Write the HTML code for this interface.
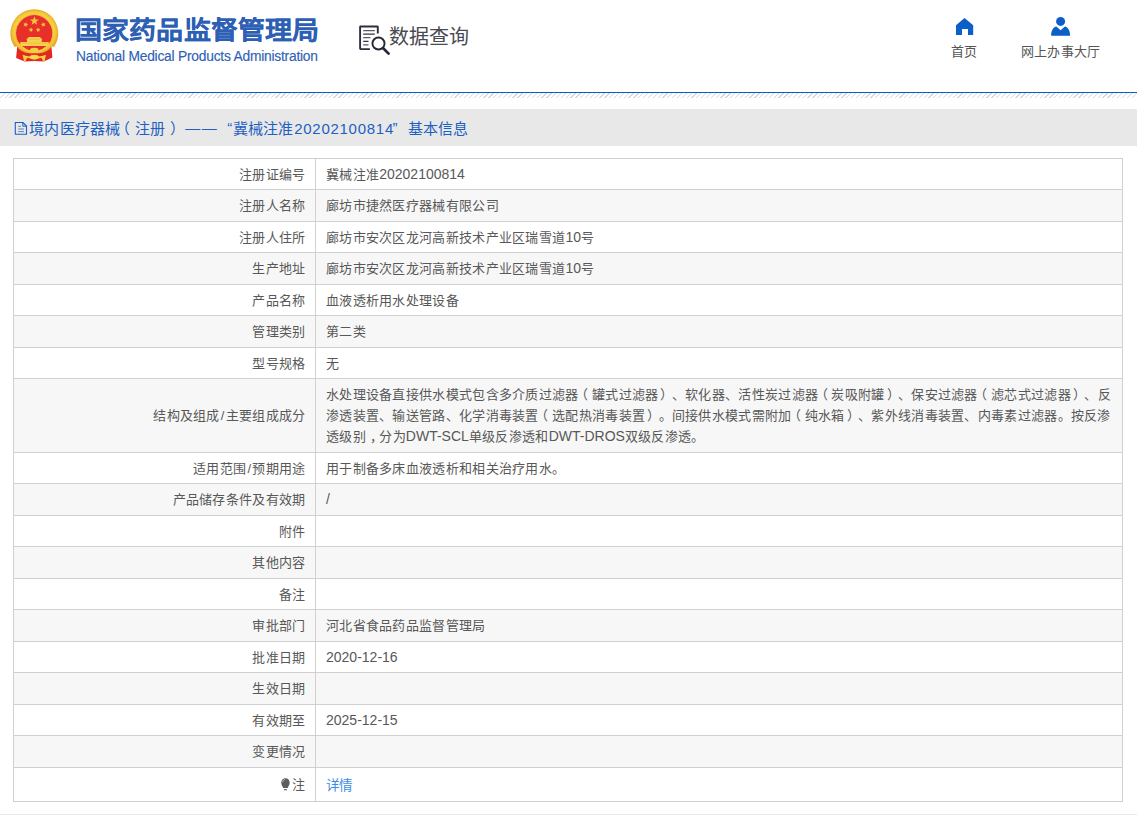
<!DOCTYPE html>
<html lang="zh-CN">
<head>
<meta charset="utf-8">
<style>
html,body{margin:0;padding:0;background:#fff;}
body{width:1137px;height:815px;overflow:hidden;position:relative;font-family:"Liberation Sans",sans-serif;color:#585858;text-spacing-trim:space-all;}
.abs{position:absolute;}
#t1{left:75px;top:13.5px;font-size:27px;font-weight:bold;color:#2d5fb4;white-space:nowrap;line-height:36px;letter-spacing:0.15px;-webkit-text-stroke:0.1px #2d5fb4;transform:scaleY(0.93);transform-origin:0 3.5px;}
#t2{left:76px;top:47.6px;font-size:13.8px;color:#3062b6;white-space:nowrap;line-height:18px;letter-spacing:-0.225px;-webkit-text-stroke:0.15px #3062b6;}
#qtext{left:388.5px;top:21px;font-size:20px;color:#4a4a52;white-space:nowrap;line-height:32px;letter-spacing:0.3px;}
.nav{font-size:13px;color:#555;white-space:nowrap;line-height:18px;letter-spacing:0.1px;}
#blueline{left:0;top:92px;width:1137px;height:1px;background:#0b5bc4;}
#stripes{left:0;top:93px;width:1137px;height:5px;
 background:repeating-linear-gradient(135deg, #fff 0, #fff 1.7px, #d6d6d6 1.7px, #d6d6d6 2.6px, #fff 2.6px, #fff 3.42px);background-position:-2.9px 0;}
#bar{left:0;top:109px;width:1137px;height:37px;background:#e8e8e8;}
#bartext{left:29px;top:118px;font-size:15px;color:#1d5fc2;white-space:nowrap;line-height:22px;letter-spacing:0.3px;}
#bartext .d{font-size:15px;letter-spacing:0.73px;}
#bartext span{position:absolute;top:0;}
.hl{position:absolute;left:13px;width:1110px;height:1px;background:#d0d0d0;}
.vl{position:absolute;width:1px;background:#d0d0d0;}
.lab{position:absolute;right:831.5px;font-size:13px;letter-spacing:0.3px;white-space:nowrap;}
.val{position:absolute;left:326px;font-size:13px;letter-spacing:0.3px;white-space:nowrap;}
.n{font-size:14px;letter-spacing:0;}
.po{position:relative;left:-3.5px;}
.pc{position:relative;left:1.9px;}
.cm{position:relative;left:4px;}
.lnk{color:#3a8ee6;position:relative;top:1.2px;font-size:13.5px;letter-spacing:0;}
.lamp{vertical-align:-2px;margin-right:1px;}
#bottomband{left:0;top:814px;width:1137px;height:1px;background:#e9e9e9;}
</style>
</head>
<body>
<svg id="emblem" class="abs" style="left:0;top:0" width="70" height="70" viewBox="0 0 70 70">
<defs><radialGradient id="gg" cx="0.5" cy="0.5" r="0.5"><stop offset="0.74" stop-color="#fbd848"/><stop offset="0.9" stop-color="#f4c438"/><stop offset="1" stop-color="#e6a828"/></radialGradient></defs>
<path d="M14.6 47 A24 24 0 1 1 54 47 L51.4 46.3 C50.1 49.6 47.6 51.6 44.6 52.6 C41.6 53.9 37.6 54.2 34.3 53.9 C31 54.2 27 53.9 24 52.6 C21 51.6 18.5 49.6 17.3 46.3 Z" fill="url(#gg)"/>
<circle cx="34.2" cy="33.3" r="18.2" fill="#e8302a"/>
<circle cx="34.2" cy="33.3" r="18.6" fill="none" stroke="#e9a428" stroke-width="0.8" opacity="0.7"/>
<path d="M34.40 16.30 L35.56 19.40 L38.87 19.55 L36.28 21.61 L37.16 24.80 L34.40 22.97 L31.64 24.80 L32.52 21.61 L29.93 19.55 L33.24 19.40 Z M26.34 22.21 L26.60 23.85 L28.10 24.56 L26.62 25.32 L26.41 26.97 L25.23 25.79 L23.60 26.10 L24.35 24.62 L23.56 23.16 L25.20 23.42 Z M42.66 22.21 L43.80 23.42 L45.44 23.16 L44.65 24.62 L45.40 26.10 L43.77 25.79 L42.59 26.97 L42.38 25.32 L40.90 24.56 L42.40 23.85 Z M31.36 27.43 L31.84 28.95 L33.37 29.41 L32.07 30.34 L32.10 31.93 L30.82 30.99 L29.32 31.51 L29.82 30.00 L28.85 28.73 L30.45 28.73 Z M37.74 27.43 L38.65 28.73 L40.25 28.73 L39.28 30.00 L39.78 31.51 L38.28 30.99 L37.00 31.93 L37.03 30.34 L35.73 29.41 L37.26 28.95 Z" fill="#f3c53c"/>
<path d="M28.6 37 H40.2 L40.8 38.6 H42.1 L41.6 41.9 H48.8 V45.9 H20.3 V41.9 H27.1 L26.6 38.6 H27.9 Z" fill="#f7d24c"/>
<path d="M28.8 39.2 H40 M21.5 43.2 H47.6" stroke="#eab838" stroke-width="0.7"/>
<path d="M17.8 43.5 Q34.3 60.8 50.8 43.5" fill="none" stroke="#f5ca3c" stroke-width="2.1"/>
<path d="M17.3 46.3 C18.5 49 21 51 24 52 C27 53.3 31 53.6 34.3 53.3 C37.6 53.6 41.6 53.3 44.6 52 C47.6 51 50.1 49 51.4 46.3 L52.4 57.6 L43.8 61.6 L34.3 61 L24.8 61.6 L16.1 58 Z" fill="#e2281f"/>
<path d="M22.6 54.8 C27 56.3 30 56.6 34.3 56.6 C38.6 56.6 41.6 56.3 46 54.8 L44.6 61 L43.2 61.2 L41.4 57.8 L34.3 59.4 L27.2 57.8 L25.4 61.2 L24 61 Z" fill="#f5cf42"/>
<ellipse cx="34.3" cy="57.1" rx="4.4" ry="2.4" fill="#f7d650"/>
<ellipse cx="34.3" cy="49.9" rx="4.3" ry="2.1" fill="#f5cf42"/>
</svg>
<div id="t1" class="abs">国家药品监督管理局</div>
<div id="t2" class="abs">National Medical Products Administration</div>
<svg id="qicon" class="abs" style="left:350px;top:20px" width="50" height="40" viewBox="350 20 50 40">
<path d="M377.8 33.5 V27 Q377.8 26.5 377.3 26.5 H360.6 Q360.1 26.5 360.1 27 V48.6 Q360.1 49.1 360.6 49.1 H369.9" fill="none" stroke="#2e2e3e" stroke-width="1.9"/>
<path d="M363.2 30.7 H374.8 M363.2 37.7 H370.4 M363.2 44.9 H368.5" stroke="#5a5a66" stroke-width="1.2"/>
<path d="M363.2 34.2 H374.8 M363.2 41.4 H368.5" stroke="#33333f" stroke-width="1.2"/>
<circle cx="378.5" cy="43.5" r="6.05" fill="none" stroke="#262636" stroke-width="1.9"/>
<path d="M383.2 48.2 L388.6 53.6" stroke="#262636" stroke-width="2.7" stroke-linecap="round"/>
</svg>
<div id="qtext" class="abs">数据查询</div>

<svg class="abs" style="left:955px;top:17px" width="20" height="19" viewBox="0 0 20 19"><path d="M9.5 1 L18.2 8.3 V18 H13 V12 H7 V18 H1 V8.3 Z" fill="#0b5fc6"/></svg>
<div class="abs nav" style="left:951px;top:43px">首页</div>
<svg class="abs" style="left:1050px;top:16px" width="22" height="21" viewBox="0 0 22 21"><circle cx="10.6" cy="5.4" r="4.5" fill="#0b5fc6"/><path d="M1.1 19.8 C1.1 14 4 11 6.3 10.6 L10.6 14.3 L14.9 10.6 C17.3 11 20.1 14 20.1 19.8 Z" fill="#0b5fc6"/></svg>
<div class="abs nav" style="left:1020.5px;top:43px;letter-spacing:0.35px">网上办事大厅</div>

<div id="blueline" class="abs"></div>
<div id="stripes" class="abs"></div>
<div id="bar" class="abs"></div>
<svg id="docicon" class="abs" style="left:10px;top:118px" width="22" height="22" viewBox="10 118 22 22">
<path d="M15.3 122.5 H23 L26.5 126 V134.3 H15.3 Z" fill="none" stroke="#1d5fc2" stroke-width="1.1"/>
<path d="M22.8 122.5 V126.2 H26.5" fill="none" stroke="#1d5fc2" stroke-width="1"/>
<path d="M18.2 126.3 H21 M18.2 129 H24 M18.2 131.6 H24" stroke="#4a78c8" stroke-width="0.9"/>
</svg>
<div id="bartext" class="abs">
<span style="left:0">境内医疗器械</span><span style="left:86.4px">（</span><span style="left:105.5px">注册</span><span style="left:140.8px">）</span><span style="left:156.3px;letter-spacing:1.4px;top:-1px">——</span><span style="left:198.3px;top:-1.5px">“</span><span style="left:203.5px">冀械注准</span><span class="d" style="left:265.2px">20202100814</span><span style="left:363.5px;top:-1.5px">”</span><span style="left:378.5px">基本信息</span>
</div>

<div class="abs" style="left:13px;top:158px;width:1110px;height:31px;background:#fff"></div>
<div class="abs" style="left:13px;top:189px;width:1110px;height:32px;background:#f7f7f7"></div>
<div class="abs" style="left:13px;top:221px;width:1110px;height:31px;background:#fff"></div>
<div class="abs" style="left:13px;top:252px;width:1110px;height:32px;background:#f7f7f7"></div>
<div class="abs" style="left:13px;top:284px;width:1110px;height:31px;background:#fff"></div>
<div class="abs" style="left:13px;top:315px;width:1110px;height:32px;background:#f7f7f7"></div>
<div class="abs" style="left:13px;top:347px;width:1110px;height:31px;background:#fff"></div>
<div class="abs" style="left:13px;top:378px;width:1110px;height:74px;background:#f7f7f7"></div>
<div class="abs" style="left:13px;top:452px;width:1110px;height:31px;background:#fff"></div>
<div class="abs" style="left:13px;top:483px;width:1110px;height:32px;background:#f7f7f7"></div>
<div class="abs" style="left:13px;top:515px;width:1110px;height:31px;background:#fff"></div>
<div class="abs" style="left:13px;top:546px;width:1110px;height:32px;background:#f7f7f7"></div>
<div class="abs" style="left:13px;top:578px;width:1110px;height:31px;background:#fff"></div>
<div class="abs" style="left:13px;top:609px;width:1110px;height:32px;background:#f7f7f7"></div>
<div class="abs" style="left:13px;top:641px;width:1110px;height:31px;background:#fff"></div>
<div class="abs" style="left:13px;top:672px;width:1110px;height:32px;background:#f7f7f7"></div>
<div class="abs" style="left:13px;top:704px;width:1110px;height:31px;background:#fff"></div>
<div class="abs" style="left:13px;top:735px;width:1110px;height:32px;background:#f7f7f7"></div>
<div class="abs" style="left:13px;top:767px;width:1110px;height:34px;background:#fff"></div>
<div class="hl" style="top:158px"></div>
<div class="hl" style="top:189px"></div>
<div class="hl" style="top:221px"></div>
<div class="hl" style="top:252px"></div>
<div class="hl" style="top:284px"></div>
<div class="hl" style="top:315px"></div>
<div class="hl" style="top:347px"></div>
<div class="hl" style="top:378px"></div>
<div class="hl" style="top:452px"></div>
<div class="hl" style="top:483px"></div>
<div class="hl" style="top:515px"></div>
<div class="hl" style="top:546px"></div>
<div class="hl" style="top:578px"></div>
<div class="hl" style="top:609px"></div>
<div class="hl" style="top:641px"></div>
<div class="hl" style="top:672px"></div>
<div class="hl" style="top:704px"></div>
<div class="hl" style="top:735px"></div>
<div class="hl" style="top:767px"></div>
<div class="hl" style="top:801px"></div>
<div class="vl" style="left:13px;top:158px;height:644px"></div>
<div class="vl" style="left:315px;top:158px;height:644px"></div>
<div class="vl" style="left:1122px;top:158px;height:644px"></div>
<div class="lab" style="top:163.5px;line-height:21px">注册证编号</div>
<div class="val" style="top:163.5px;line-height:21px">冀械注准<span class="n">20202100814</span></div>
<div class="lab" style="top:195.0px;line-height:21px">注册人名称</div>
<div class="val" style="top:195.0px;line-height:21px">廊坊市捷然医疗器械有限公司</div>
<div class="lab" style="top:226.5px;line-height:21px">注册人住所</div>
<div class="val" style="top:226.5px;line-height:21px">廊坊市安次区龙河高新技术产业区瑞雪道<span class="n">10</span>号</div>
<div class="lab" style="top:258.0px;line-height:21px">生产地址</div>
<div class="val" style="top:258.0px;line-height:21px">廊坊市安次区龙河高新技术产业区瑞雪道<span class="n">10</span>号</div>
<div class="lab" style="top:289.5px;line-height:21px">产品名称</div>
<div class="val" style="top:289.5px;line-height:21px">血液透析用水处理设备</div>
<div class="lab" style="top:321.0px;line-height:21px">管理类别</div>
<div class="val" style="top:321.0px;line-height:21px">第二类</div>
<div class="lab" style="top:352.5px;line-height:21px">型号规格</div>
<div class="val" style="top:352.5px;line-height:21px">无</div>
<div class="lab" style="top:405.0px;line-height:21px">结构及组成<span style="margin:0 1px">/</span>主要组成成分</div>
<div class="val" style="top:384.0px;line-height:21px">水处理设备直接供水模式包含多介质过滤器<span class="po">（</span>罐式过滤器<span class="pc">）</span>、软化器、活性炭过滤器<span class="po">（</span>炭吸附罐<span class="pc">）</span>、保安过滤器<span class="po">（</span>滤芯式过滤器<span class="pc">）</span>、反<br>渗透装置、输送管路、化学消毒装置<span class="po">（</span>选配热消毒装置<span class="pc">）</span>。间接供水模式需附加<span class="po">（</span>纯水箱<span class="pc">）</span>、紫外线消毒装置、内毒素过滤器。按反渗<br>透级别<span class="cm">，</span>分为<span class="n">DWT-SCL</span>单级反渗透和<span class="n">DWT-DROS</span>双级反渗透。</div>
<div class="lab" style="top:457.5px;line-height:21px">适用范围<span style="margin:0 1px">/</span>预期用途</div>
<div class="val" style="top:457.5px;line-height:21px">用于制备多床血液透析和相关治疗用水。</div>
<div class="lab" style="top:489.0px;line-height:21px">产品储存条件及有效期</div>
<div class="val" style="top:489.0px;line-height:21px"><span class="n">/</span></div>
<div class="lab" style="top:520.5px;line-height:21px">附件</div>
<div class="lab" style="top:552.0px;line-height:21px">其他内容</div>
<div class="lab" style="top:583.5px;line-height:21px">备注</div>
<div class="lab" style="top:615.0px;line-height:21px">审批部门</div>
<div class="val" style="top:615.0px;line-height:21px">河北省食品药品监督管理局</div>
<div class="lab" style="top:646.5px;line-height:21px">批准日期</div>
<div class="val" style="top:646.5px;line-height:21px"><span class="n">2020-12-16</span></div>
<div class="lab" style="top:678.0px;line-height:21px">生效日期</div>
<div class="lab" style="top:709.5px;line-height:21px">有效期至</div>
<div class="val" style="top:709.5px;line-height:21px"><span class="n">2025-12-15</span></div>
<div class="lab" style="top:741.0px;line-height:21px">变更情况</div>
<div class="lab" style="top:774.0px;line-height:21px"><svg class="lamp" width="11" height="13" viewBox="0 0 11 13"><path d="M5.45 0.3 C8 0.3 9.7 2.1 9.7 4.8 C9.7 7.1 8.3 8.3 7.7 10 H3.2 C2.6 8.3 1.2 7.1 1.2 4.8 C1.2 2.1 3 0.3 5.45 0.3 Z" fill="#5e5e5e"/><path d="M2.6 4.2 C2.8 2.6 3.8 1.6 5.2 1.4" fill="none" stroke="#c9d4dc" stroke-width="0.8"/><rect x="3.9" y="11" width="3.1" height="1.3" fill="#777"/></svg>注</div>
<div class="val" style="top:774.0px;line-height:21px"><span class="lnk">详情</span></div>
<div id="bottomband" class="abs"></div>
</body>
</html>
